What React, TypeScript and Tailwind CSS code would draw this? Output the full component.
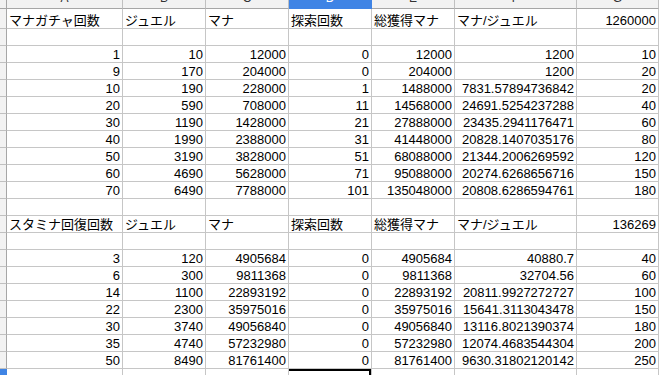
import React from "react";

const COLS = ["A", "B", "C", "D", "E", "F", "G", "H"];
const WIDTHS = [115, 82, 82, 82, 82, 121, 81];

type Cell = { v: string; num?: boolean };

const t = (v: string): Cell => ({ v });
const n = (v: string | number): Cell => ({ v: String(v), num: true });

const sec1: (string | number)[][] = [
  [1, 10, 12000, 0, 12000, 1200, 10],
  [9, 170, 204000, 0, 204000, 1200, 20],
  [10, 190, 228000, 1, 1488000, "7831.57894736842", 20],
  [20, 590, 708000, 11, 14568000, "24691.5254237288", 40],
  [30, 1190, 1428000, 21, 27888000, "23435.2941176471", 60],
  [40, 1990, 2388000, 31, 41448000, "20828.1407035176", 80],
  [50, 3190, 3828000, 51, 68088000, "21344.2006269592", 120],
  [60, 4690, 5628000, 71, 95088000, "20274.6268656716", 150],
  [70, 6490, 7788000, 101, 135048000, "20808.6286594761", 180],
];

const sec2: (string | number)[][] = [
  [3, 120, 4905684, 0, 4905684, "40880.7", 40],
  [6, 300, 9811368, 0, 9811368, "32704.56", 60],
  [14, 1100, 22893192, 0, 22893192, "20811.9927272727", 100],
  [22, 2300, 35975016, 0, 35975016, "15641.3113043478", 150],
  [30, 3740, 49056840, 0, 49056840, "13116.8021390374", 180],
  [35, 4740, 57232980, 0, 57232980, "12074.4683544304", 200],
  [50, 8490, 81761400, 0, 81761400, "9630.31802120142", 250],
];

const empty: Cell[] = [];

const rows: { cells: Cell[]; h: number; selected?: boolean }[] = [
  {
    cells: [t("マナガチャ回数"), t("ジュエル"), t("マナ"), t("探索回数"), t("総獲得マナ"), t("マナ/ジュエル"), n(1260000)],
    h: 20,
  },
  { cells: empty, h: 17 },
  ...sec1.map((r) => ({ cells: r.map((x) => n(x)), h: 17 })),
  { cells: empty, h: 17 },
  {
    cells: [t("スタミナ回復回数"), t("ジュエル"), t("マナ"), t("探索回数"), t("総獲得マナ"), t("マナ/ジュエル"), n(136269)],
    h: 17,
  },
  { cells: empty, h: 17 },
  ...sec2.map((r) => ({ cells: r.map((x) => n(x)), h: 17 })),
  { cells: empty, h: 17, selected: true },
];

export default function App() {
  return (
    <div
      className="w-[659px] h-[375px] overflow-hidden bg-white text-black"
      style={{ fontFamily: '"Liberation Sans", "Noto Sans CJK JP", sans-serif' }}
    >
      {/* column header */}
      <div className="flex h-[9px]">
        <div className="w-[7px] shrink-0 bg-[#f2f2f2] border-r border-b border-[#a6a6a6]" />
        {COLS.map((c, i) => (
          <div
            key={c}
            className={
              "shrink-0 flex items-end justify-center overflow-hidden border-r border-b pb-[3px] text-[12px] leading-[14px] " +
              (c === "D"
                ? "bg-[#3f84e5] text-white border-[#3f84e5] border-b-[#3f84e5]"
                : "bg-[#f2f2f2] text-[#333] border-[#c0c0c0] border-b-[#a6a6a6]") +
              (i === COLS.length - 1 ? " flex-1" : "")
            }
            style={i < WIDTHS.length ? { width: WIDTHS[i] + 1 } : undefined}
          >
            {c}
          </div>
        ))}
      </div>
      {rows.map((r, ri) => (
        <div key={ri} className="flex" style={{ height: r.h }}>
          <div
            className={
              "w-[7px] shrink-0 border-r border-b " +
              (r.selected ? "bg-[#3f84e5] border-[#3f84e5]" : "bg-[#f2f2f2] border-r-[#a6a6a6] border-b-[#c0c0c0]")
            }
          />
          {WIDTHS.map((w, ci) => {
            const cell = r.cells[ci];
            const sel = r.selected && ci === 3;
            return (
              <div
                key={ci}
                className={
                  "shrink-0 flex items-end overflow-hidden whitespace-nowrap border-r border-b border-[#c6c6c6] px-[2px] text-[13px] leading-[15px] " +
                  (cell?.num ? "justify-end" : "justify-start") +
                  (sel ? " relative" : "")
                }
                style={{ width: w + 1 }}
              >
                {cell ? cell.v : null}
                {sel ? (
                  <div className="absolute left-[-2px] top-[0px] w-[84px] h-[20px] border-2 border-black" />
                ) : null}
              </div>
            );
          })}
          <div className="flex-1 border-b border-[#c6c6c6]" />
        </div>
      ))}
    </div>
  );
}
